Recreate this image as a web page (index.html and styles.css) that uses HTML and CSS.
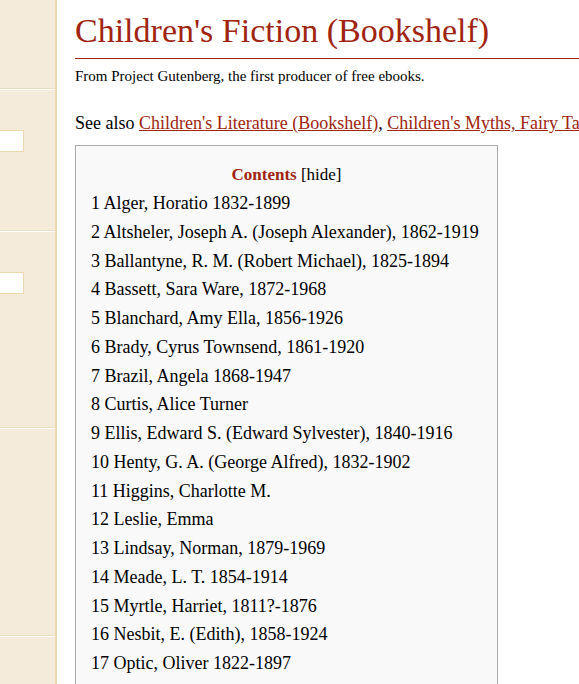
FILE: index.html
```html
<!DOCTYPE html>
<html>
<head>
<meta charset="utf-8">
<link rel="stylesheet" href="styles.css">
</head>
<body>
<div class="page">
  <aside class="side">
    <div class="sec sec1"></div>
    <div class="sec sec2"><div class="box"></div></div>
    <div class="sec sec3"><div class="box"></div></div>
    <div class="sec sec4"></div>
    <div class="sec sec5"></div>
  </aside>
  <main class="main">
    <h1 class="title">Children's Fiction (Bookshelf)</h1>
    <div class="sub">From Project Gutenberg, the first producer of free ebooks.</div>
    <p class="see">See also <a href="#">Children's Literature (Bookshelf)</a>, <a href="#">Children's Myths, Fairy Tales, etc. (Bookshelf)</a></p>
    <div class="toc">
      <div class="toc-title"><b>Contents</b> [hide]</div>
      <ul class="toc-list">
        <li>1 Alger, Horatio 1832-1899</li>
        <li>2 Altsheler, Joseph A. (Joseph Alexander), 1862-1919</li>
        <li>3 Ballantyne, R. M. (Robert Michael), 1825-1894</li>
        <li>4 Bassett, Sara Ware, 1872-1968</li>
        <li>5 Blanchard, Amy Ella, 1856-1926</li>
        <li>6 Brady, Cyrus Townsend, 1861-1920</li>
        <li>7 Brazil, Angela 1868-1947</li>
        <li>8 Curtis, Alice Turner</li>
        <li>9 Ellis, Edward S. (Edward Sylvester), 1840-1916</li>
        <li>10 Henty, G. A. (George Alfred), 1832-1902</li>
        <li>11 Higgins, Charlotte M.</li>
        <li>12 Leslie, Emma</li>
        <li>13 Lindsay, Norman, 1879-1969</li>
        <li>14 Meade, L. T. 1854-1914</li>
        <li>15 Myrtle, Harriet, 1811?-1876</li>
        <li>16 Nesbit, E. (Edith), 1858-1924</li>
        <li>17 Optic, Oliver 1822-1897</li>
      </ul>
    </div>
  </main>
</div>
</body>
</html>
```
FILE: styles.css
```css
html, body {
  margin: 0;
  padding: 0;
  background: #fff;
  overflow: hidden;
}
.page {
  display: flex;
  width: 579px;
  height: 684px;
  overflow: hidden;
  font-family: "Liberation Serif", "Times New Roman", serif;
  color: #000;
}
.side {
  flex: 0 0 55px;
  background: #f5ebdb;
  border-right: 2px solid #efd8b2;
  display: flex;
  flex-direction: column;
}
.sec {
  border-bottom: 1px solid #ecdcbf;
  box-shadow: 0 1px 0 #fff;
  margin-bottom: 1px;
  box-sizing: border-box;
}
.sec1 { height: 89px; }
.sec2, .sec3 { padding-top: 40px; }
.sec2 { height: 141px; }
.sec3 { height: 196px; }
.sec4 { height: 207px; }
.sec5 { flex: 1; border-bottom: 0; box-shadow: none; }
.box {
  width: 23px;
  height: 20px;
  background: #fff;
  border: 1px solid #efd8b2;
  border-left: 0;
}
.main {
  flex: 1;
  min-width: 0;
  padding-left: 18px;
  white-space: nowrap;
}
.title {
  margin: 9px 0 0;
  font-size: 34px;
  font-weight: normal;
  color: #a0240f;
  line-height: 44px;
  padding-bottom: 5px;
  border-bottom: 1px solid #a0240f;
}
.sub {
  font-size: 15px;
  margin-top: 8px;
  line-height: 18px;
}
.see {
  font-size: 18px;
  margin: 27px 0 0;
  line-height: 22px;
}
.see a {
  color: #a0240f;
  text-decoration: underline;
}
.toc {
  margin-top: 11px;
  width: 423px;
  border: 1px solid #aaa;
  background: #f9f9f9;
  padding: 14px 0 0 15px;
  box-sizing: border-box;
  height: 600px;
}
.toc-title {
  text-align: center;
  font-size: 17px;
  line-height: 29px;
  padding-right: 15px;
}
.toc-title b { color: #a0240f; }
.toc-list {
  list-style: none;
  margin: 0;
  padding: 0;
  font-size: 18px;
  line-height: 28.75px;
}
```
